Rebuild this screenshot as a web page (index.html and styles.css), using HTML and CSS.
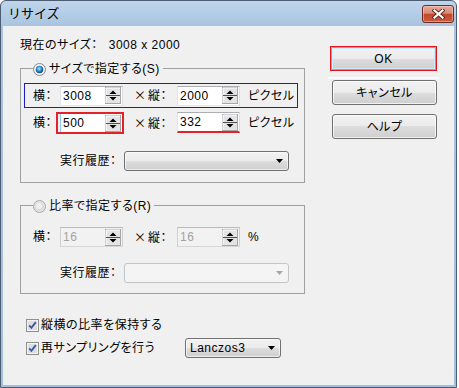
FILE: index.html
```html
<!DOCTYPE html>
<html lang="ja">
<head>
<meta charset="utf-8">
<title>リサイズ</title>
<link rel="stylesheet" href="styles.css">
</head>
<body>
<div class="window">
  <div class="titlebar">
    <span class="title">リサイズ</span>
    <div class="close">
      <svg width="13" height="10" viewBox="0 0 13 10"><path d="M2.5 1.5 L10.5 8.5 M10.5 1.5 L2.5 8.5" stroke="#5a2a24" stroke-width="4" stroke-linecap="square" fill="none"/><path d="M2.5 1.5 L10.5 8.5 M10.5 1.5 L2.5 8.5" stroke="#ffffff" stroke-width="2.2" stroke-linecap="square" fill="none"/></svg>
    </div>
  </div>
  <div class="client">
    <div class="left">
      <div class="current">現在のサイズ：<span class="num">3008 x 2000</span></div>

      <div class="group g1">
        <div class="legend">
          <svg class="radio" width="13" height="13" viewBox="0 0 13 13"><defs><radialGradient id="rdot" cx="45%" cy="40%" r="60%"><stop offset="0" stop-color="#b8ecff"/><stop offset="0.45" stop-color="#3a9ad8"/><stop offset="1" stop-color="#0d3f78"/></radialGradient></defs><circle cx="6.5" cy="6.5" r="6" fill="#eaeaea" stroke="#8a8a8a"/><circle cx="6.5" cy="6.5" r="4.9" fill="#f8f8f8"/><circle cx="6.5" cy="6.5" r="3.8" fill="url(#rdot)"/></svg>
          <span>サイズで指定する(S)</span>
        </div>
        <div class="row hl">
          <span>横：</span>
          <div class="spinbox"><span class="val">3008</span><svg class="spin" width="16" height="17" viewBox="0 0 16 17"><rect x="0.5" y="0.5" width="15" height="16" fill="#e4e4e4" stroke="#a6a6a6"/><path d="M1 16 V1 H15" stroke="#ffffff" fill="none"/><path d="M4.5 7 H11.5 L8 3.5 Z" fill="#000"/><path d="M1 8.5 H15" stroke="#505050"/><path d="M4.5 10 H11.5 L8 13.5 Z" fill="#000"/></svg></div>
          <span class="lbl2"><span class="times">×</span>縦：</span>
          <div class="spinbox"><span class="val">2000</span><svg class="spin" width="16" height="17" viewBox="0 0 16 17"><rect x="0.5" y="0.5" width="15" height="16" fill="#e4e4e4" stroke="#a6a6a6"/><path d="M1 16 V1 H15" stroke="#ffffff" fill="none"/><path d="M4.5 7 H11.5 L8 3.5 Z" fill="#000"/><path d="M1 8.5 H15" stroke="#505050"/><path d="M4.5 10 H11.5 L8 13.5 Z" fill="#000"/></svg></div>
          <span class="unit">ピクセル</span>
        </div>
        <div class="row r2">
          <span>横：</span>
          <div class="redbox"><div class="spinbox focus"><span class="val">500</span><svg class="spin" width="16" height="17" viewBox="0 0 16 17"><rect x="0.5" y="0.5" width="15" height="16" fill="#e4e4e4" stroke="#a6a6a6"/><path d="M1 16 V1 H15" stroke="#ffffff" fill="none"/><path d="M4.5 7 H11.5 L8 3.5 Z" fill="#000"/><path d="M1 8.5 H15" stroke="#505050"/><path d="M4.5 10 H11.5 L8 13.5 Z" fill="#000"/></svg></div></div>
          <span class="lbl2"><span class="times">×</span>縦：</span>
          <div class="spinbox ul"><span class="val">332</span><svg class="spin" width="16" height="17" viewBox="0 0 16 17"><rect x="0.5" y="0.5" width="15" height="16" fill="#e4e4e4" stroke="#a6a6a6"/><path d="M1 16 V1 H15" stroke="#ffffff" fill="none"/><path d="M4.5 7 H11.5 L8 3.5 Z" fill="#000"/><path d="M1 8.5 H15" stroke="#505050"/><path d="M4.5 10 H11.5 L8 13.5 Z" fill="#000"/></svg></div>
          <span class="unit">ピクセル</span>
        </div>
        <div class="hist">
          <span class="hlbl">実行履歴：</span>
          <div class="combo"><svg width="7" height="4" viewBox="0 0 7 4"><path d="M0 0 H7 L3.5 4 Z" fill="#000"/></svg></div>
        </div>
      </div>

      <div class="group g2">
        <div class="legend">
          <svg class="radio" width="13" height="13" viewBox="0 0 13 13"><circle cx="6.5" cy="6.5" r="6" fill="#e6e6e6" stroke="#a8a8a8"/><circle cx="6.5" cy="6.5" r="4.6" fill="#dcdcdc"/><circle cx="6" cy="6" r="3" fill="#efefef"/></svg>
          <span>比率で指定する(R)</span>
        </div>
        <div class="row r3">
          <span>横：</span>
          <div class="spinbox dis"><span class="val">16</span><svg class="spin" width="16" height="17" viewBox="0 0 16 17"><rect x="0.5" y="0.5" width="15" height="16" fill="#e4e4e4" stroke="#a6a6a6"/><path d="M1 16 V1 H15" stroke="#ffffff" fill="none"/><path d="M4.5 7 H11.5 L8 3.5 Z" fill="#000"/><path d="M1 8.5 H15" stroke="#505050"/><path d="M4.5 10 H11.5 L8 13.5 Z" fill="#000"/></svg></div>
          <span class="lbl2"><span class="times">×</span>縦：</span>
          <div class="spinbox dis"><span class="val">16</span><svg class="spin" width="16" height="17" viewBox="0 0 16 17"><rect x="0.5" y="0.5" width="15" height="16" fill="#e4e4e4" stroke="#a6a6a6"/><path d="M1 16 V1 H15" stroke="#ffffff" fill="none"/><path d="M4.5 7 H11.5 L8 3.5 Z" fill="#000"/><path d="M1 8.5 H15" stroke="#505050"/><path d="M4.5 10 H11.5 L8 13.5 Z" fill="#000"/></svg></div>
          <span class="unit">%</span>
        </div>
        <div class="hist h2">
          <span class="hlbl">実行履歴：</span>
          <div class="combo dis"><svg width="7" height="4" viewBox="0 0 7 4"><path d="M0 0 H7 L3.5 4 Z" fill="#a8a8a8"/></svg></div>
        </div>
      </div>

      <div class="chk c1">
        <svg class="cbox" width="13" height="13" viewBox="0 0 13 13"><rect x="0.5" y="0.5" width="12" height="12" fill="#f4f4f4" stroke="#8e8f8f"/><rect x="2" y="2" width="9" height="9" fill="#dedede"/><path d="M3.2 6.4 L5.4 8.8 L9.8 3.2" stroke="#3a5aa8" stroke-width="1.9" fill="none"/></svg>
        <span class="clbl">縦横の比率を保持する</span>
      </div>
      <div class="chk c2">
        <svg class="cbox" width="13" height="13" viewBox="0 0 13 13"><rect x="0.5" y="0.5" width="12" height="12" fill="#f4f4f4" stroke="#8e8f8f"/><rect x="2" y="2" width="9" height="9" fill="#dedede"/><path d="M3.2 6.4 L5.4 8.8 L9.8 3.2" stroke="#3a5aa8" stroke-width="1.9" fill="none"/></svg>
        <span class="clbl wide">再サンプリングを行う</span>
        <div class="combo lz"><span>Lanczos3</span><svg width="7" height="4" viewBox="0 0 7 4"><path d="M0 0 H7 L3.5 4 Z" fill="#000"/></svg></div>
      </div>
    </div>

    <div class="right">
      <div class="okwrap"><div class="btn ok">OK</div></div>
      <div class="sep"></div>
      <div class="btn cancel">キャンセル</div>
      <div class="btn help">ヘルプ</div>
    </div>
  </div>
</div>
</body>
</html>
```

FILE: styles.css
```css
html, body {
  margin: 0;
  padding: 0;
  background: #ffffff;
}
body {
  font-family: "Liberation Sans", "Noto Sans CJK JP", sans-serif;
  font-size: 12px;
  line-height: 14px;
  letter-spacing: 0.5px;
  color: #000;
  font-feature-settings: "palt";
}

.window {
  width: 457px;
  height: 388px;
  box-sizing: border-box;
  border: 1px solid #4d5d70;
  border-radius: 6px 6px 0 0;
  background: linear-gradient(#bfd5eb, #a9c4e0 26px, #a2bfdd);
  display: flex;
  flex-direction: column;
  overflow: hidden;
}

.titlebar {
  height: 25px;
  flex: none;
  display: flex;
  align-items: center;
  padding: 0 2px 0 7px;
}
.title {
  font-size: 13px;
  line-height: 16px;
  letter-spacing: 0;
  font-feature-settings: normal;
  color: #000;
}
.close {
  margin-left: auto;
  width: 32px;
  height: 18px;
  box-sizing: border-box;
  border: 1px solid #6e2a22;
  border-radius: 3px;
  background: linear-gradient(#e6ab9e, #d98a77 45%, #c4482c 52%, #c85a3e);
  box-shadow: inset 0 0 0 1px rgba(255, 220, 210, 0.45);
  display: flex;
  align-items: center;
  justify-content: center;
}

.client {
  margin: 0 2px 2px;
  height: 359px;
  flex: none;
  background: #f0f0f0;
  display: flex;
}

.left {
  width: 285px;
  padding: 12px 0 0 17px;
  flex: none;
}
.right {
  width: 107px;
  margin-left: 25px;
  padding-top: 20px;
  flex: none;
}

.current {
  height: 14px;
  white-space: nowrap;
}
.current .num {
  margin-left: 11px;
}

.group {
  box-sizing: border-box;
  width: 285px;
  border: 1px solid #a0a0a0;
}
.g1 {
  margin-top: 16px;
  padding-bottom: 11px;
}
.g2 {
  margin-top: 22px;
  padding-bottom: 10px;
}

.legend {
  display: flex;
  align-items: center;
  width: max-content;
  height: 14px;
  margin: -7px 0 0 12px;
  padding-right: 3px;
  background: #f0f0f0;
  white-space: nowrap;
}
.radio {
  margin-right: 3px;
  flex: none;
}

.row {
  display: grid;
  grid-template-columns: 27px 63px 54px 63px auto;
  align-items: center;
  box-sizing: border-box;
  width: 274px;
  margin-left: 3px;
  padding-left: 8px;
  border: 1px solid transparent;
  white-space: nowrap;
}
.row.hl {
  border-color: #1c1cc8;
  height: 25px;
  margin-top: 7px;
}
.row.r2 {
  height: 24px;
  margin-top: 3px;
}
.row.r3 {
  height: 22px;
  margin-top: 13px;
}
.lbl2 {
  padding-left: 11px;
}
.times {
  font-family: "Noto Sans CJK JP", sans-serif;
  font-feature-settings: normal;
  letter-spacing: 0;
  display: inline-block;
  width: 14px;
}
.unit {
  padding-left: 8px;
}

.spinbox {
  box-sizing: border-box;
  width: 63px;
  height: 20px;
  border: 1px solid;
  border-color: #abadb3 #dbdfe6 #e3e9ef #e2e3ea;
  background: #fff;
  display: flex;
  align-items: center;
  justify-content: space-between;
  padding: 0 1px 0 2px;
}
.spin {
  flex: none;
}
.spinbox.ul {
  height: 21px;
  align-self: start;
  border-bottom: 2px solid #e3212b;
}
.spinbox.dis {
  background: #f2f2f2;
  border-color: #b9b9b9 #d0d0d0 #d6d6d6 #d0d0d0;
  color: #a3a3a3;
}

.redbox {
  box-sizing: border-box;
  width: 68px;
  height: 22px;
  margin-left: -4px;
  border: 2px solid #e3212b;
  padding-left: 2px;
  display: flex;
  align-items: center;
}
.redbox .spinbox {
  width: 62px;
  height: 18px;
  border: none;
  border-left: 1px solid #8cc6ee;
}

.hist {
  display: flex;
  align-items: center;
  margin: 16px 0 0 39px;
}
.hist.h2 {
  margin-top: 15px;
}
.hlbl {
  width: 64px;
  white-space: nowrap;
}

.combo {
  box-sizing: border-box;
  width: 165px;
  height: 20px;
  border: 1px solid #707070;
  border-radius: 3px;
  background: linear-gradient(#f2f2f2, #ebebeb 50%, #dddddd 50%, #cfcfcf);
  box-shadow: inset 0 0 0 1px rgba(255, 255, 255, 0.6);
  display: flex;
  align-items: center;
  justify-content: flex-end;
  padding: 0 5px 0 4px;
}
.combo.dis {
  border-color: #c2c4c6;
  background: #f4f4f4;
  box-shadow: none;
}
.combo.lz {
  width: 96px;
  justify-content: space-between;
}

.chk {
  display: flex;
  align-items: center;
  margin-left: 6px;
  white-space: nowrap;
}
.c1 {
  margin-top: 24px;
  height: 14px;
}
.c2 {
  margin-top: 6px;
  height: 20px;
}
.cbox {
  flex: none;
}
.clbl {
  margin-left: 2px;
}
.clbl.wide {
  width: 144px;
}

.btn {
  box-sizing: border-box;
  display: flex;
  align-items: center;
  justify-content: center;
  border: 1px solid #707070;
  border-radius: 3px;
  background: linear-gradient(#f2f2f2, #ebebeb 50%, #dddddd 50%, #cfcfcf);
  box-shadow: inset 0 0 0 1px rgba(255, 255, 255, 0.7);
  white-space: nowrap;
}
.okwrap {
  box-sizing: border-box;
  width: 107px;
  height: 25px;
  border: 1px solid #e3141e;
}
.btn.ok {
  width: 100%;
  height: 100%;
  border: 1px solid #3cc8f0;
  border-radius: 0;
  box-shadow: inset 0 0 0 1px #c8eefa;
}
.sep {
  width: 111px;
  height: 2px;
  margin: 6px 0 1px -2px;
  background: #fbfbfb;
}
.btn.cancel,
.btn.help {
  width: 105px;
  height: 25px;
  margin-left: 2px;
}
.btn.help {
  margin-top: 9px;
}
```
